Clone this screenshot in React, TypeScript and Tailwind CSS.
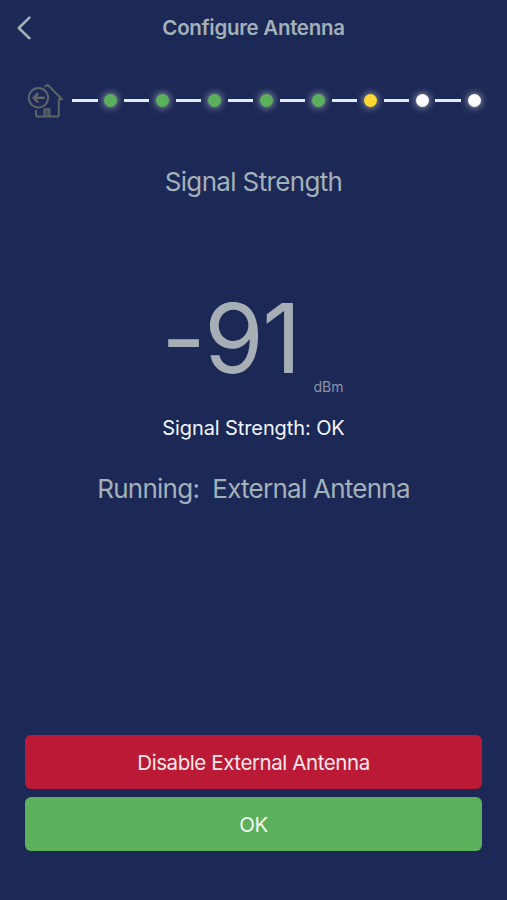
import React from "react"

type StepStatus = "done" | "current" | "pending"

const steps: StepStatus[] = ["done", "done", "done", "done", "done", "current", "pending", "pending"]

const dotColors: Record<StepStatus, string> = {
  done: "bg-[#5cb05b]",
  current: "bg-[#fdd835]",
  pending: "bg-white",
}

function HomeIcon() {
  return (
    <svg
      viewBox="0 0 36 36"
      className="h-9 w-9 shrink-0 text-[#5e6468]"
      fill="none"
      stroke="currentColor"
      strokeWidth="2"
      strokeLinecap="round"
      strokeLinejoin="round"
    >
      {/* House outline, open where the badge sits */}
      <path d="M18.4 4.4L20.6 2.8L35 17.2H31.8V32.4Q31.8 34.6 29.6 34.6H11.2Q9 34.6 9 32.4V28.6" />
      <path d="M17.4 34V27.2H22.4V34" fill="currentColor" fillOpacity="0.6" />
      <circle cx="11.4" cy="15.8" r="9.7" />
      <path d="M16.8 15.8H6.6M10.4 12L6.6 15.8L10.4 19.6" strokeWidth="2.6" />
    </svg>
  )
}

function Stepper() {
  return (
    <div className="flex h-9 items-center pl-[27px]">
      <HomeIcon />
      <div className="ml-[9px] flex items-center">
        {steps.map((status, idx) => (
          <div key={idx} className="flex w-[51.93px] shrink-0 items-center">
            <div className="h-[3px] w-[25.5px] bg-[#e6e9f8]" />
            <div
              className={`ml-[6.6px] size-[13px] rounded-full shadow-[0_0_7px_1px_rgba(255,255,255,0.5)] ${dotColors[status]}`}
            />
          </div>
        ))}
      </div>
    </div>
  )
}

export default function App() {
  return (
    <div className="flex h-[900px] w-[507px] flex-col overflow-hidden bg-[#1c2856] font-['Inter',sans-serif] text-[#a3b1b9]">
      <header className="grid h-14 grid-cols-[60px_1fr_60px] items-center">
        <button className="pl-[17px]" aria-label="Back">
          <svg viewBox="0 0 14 24" className="h-6 w-3.5" fill="none" stroke="currentColor" strokeWidth="2.6" strokeLinecap="round" strokeLinejoin="round">
            <path d="M12.4 1.6L1.8 12L12.4 22.2" />
          </svg>
        </button>
        <h1 className="text-center text-[20.5px] font-semibold tracking-[-0.3px] whitespace-nowrap">Configure Antenna</h1>
      </header>

      <div className="mt-[26px]">
        <Stepper />
      </div>

      <main className="flex flex-1 flex-col items-center whitespace-nowrap">
        <h2 className="mt-11 h-10 text-[26px] leading-10 tracking-[-0.65px]">Signal Strength</h2>

        {/* Reading with its unit on the lower right */}
        <div className="mt-20 flex h-[115px] w-[184px] items-start justify-between pr-0.5">
          <span className="h-28 text-[96px] leading-[112px] tracking-[-1.5px] text-[#a7afb6] [font-feature-settings:'calt'_0]">-91</span>
          <span className="mt-[95px] text-[14px] leading-5 text-[#8b95a8]">dBm</span>
        </div>

        <p className="mt-4 h-[30px] text-[20px] leading-[30px] tracking-[-0.1px] text-[#f0f6ff]">Signal Strength: OK</p>
        <p className="mt-[26px] h-10 text-[26px] leading-10 tracking-[-0.75px] whitespace-pre">Running:  External Antenna</p>
      </main>

      <footer className="flex flex-col gap-2 px-[25px] pb-[49px] text-[20.5px] tracking-[-0.42px]">
        <button className="h-[54px] rounded-md bg-[#ba1a36] pt-0.5 text-[#fde8ec]">Disable External Antenna</button>
        <button className="h-[54px] rounded-md bg-[#5cb05b] pt-0.5 text-[#f1fbf1]">OK</button>
      </footer>
    </div>
  )
}
